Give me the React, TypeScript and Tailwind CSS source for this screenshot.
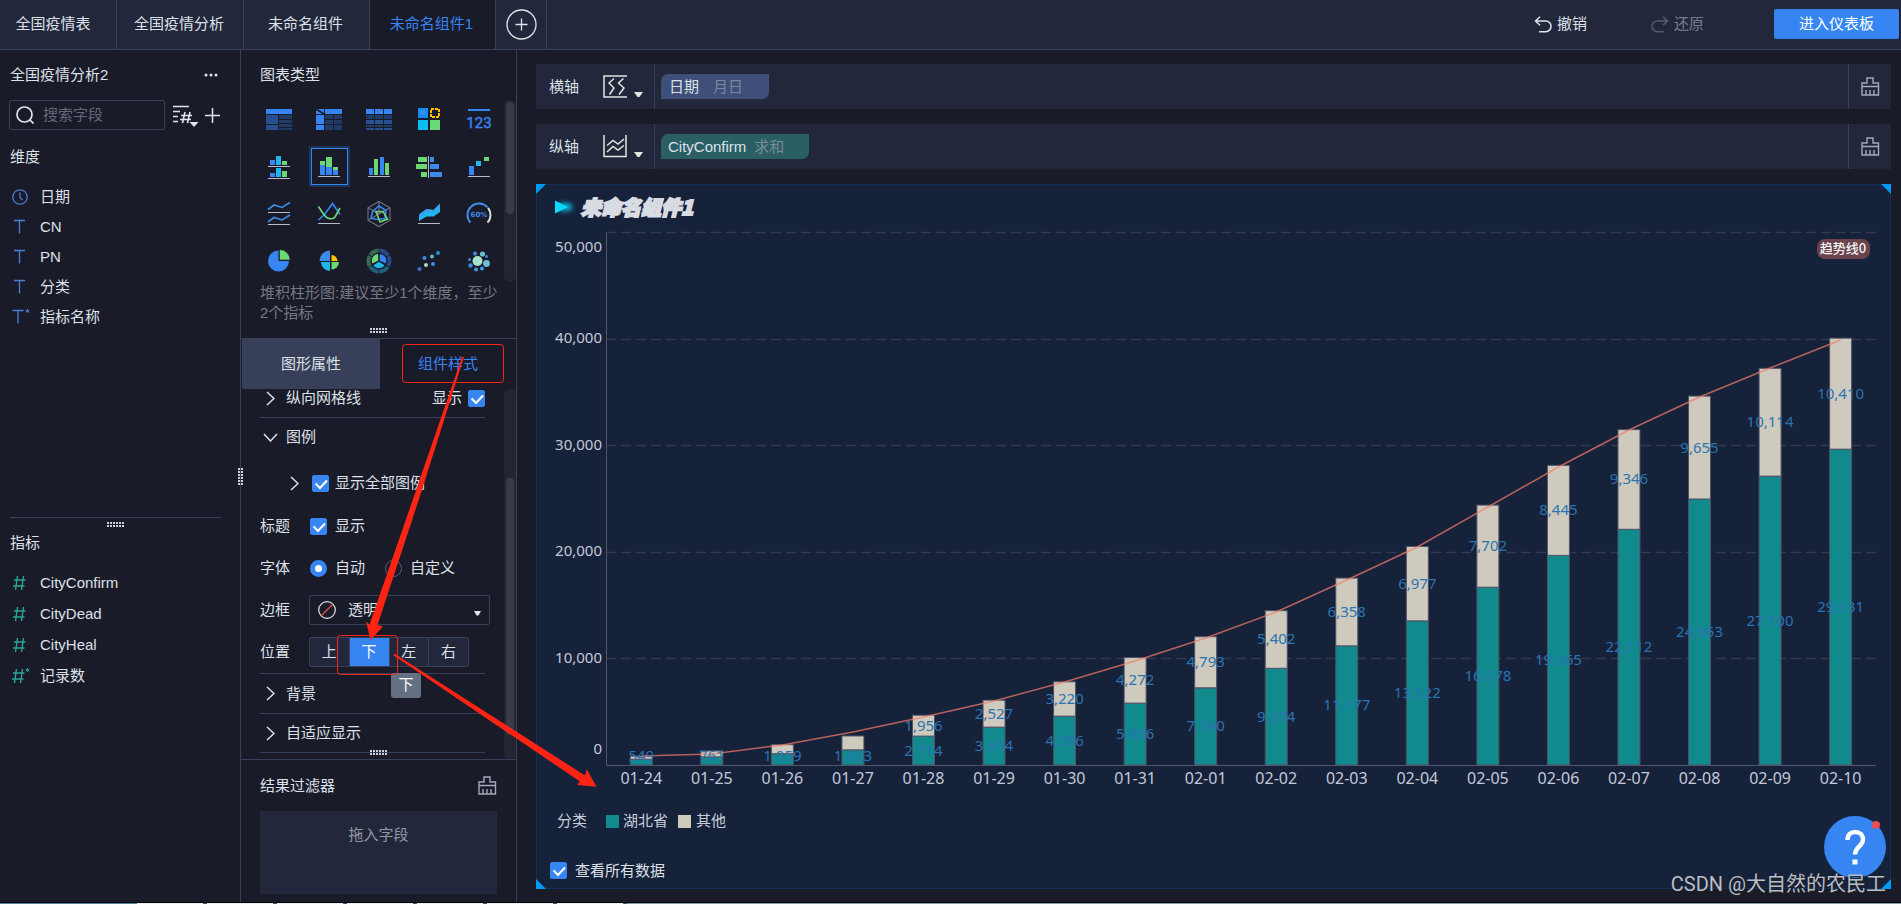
import React from "react";

const BLUE = "#3685f2";
const GREEN = "#6bd876";
const CYAN = "#1fb6ec";
const NAVY = "#1f3c66";
const MID = "#26508f";

function wedge(cx: number, cy: number, r: number, a0: number, a1: number) {
  const rad = Math.PI / 180;
  const x0 = cx + r * Math.cos(a0 * rad);
  const y0 = cy + r * Math.sin(a0 * rad);
  const x1 = cx + r * Math.cos(a1 * rad);
  const y1 = cy + r * Math.sin(a1 * rad);
  return `M${cx} ${cy}L${x0} ${y0}A${r} ${r} 0 ${a1 - a0 > 180 ? 1 : 0} 1 ${x1} ${y1}Z`;
}

function arc(cx: number, cy: number, r: number, a0: number, a1: number) {
  const rad = Math.PI / 180;
  return `M${cx + r * Math.cos(a0 * rad)} ${cy + r * Math.sin(a0 * rad)}A${r} ${r} 0 ${
    a1 - a0 > 180 ? 1 : 0
  } 1 ${cx + r * Math.cos(a1 * rad)} ${cy + r * Math.sin(a1 * rad)}`;
}

type R = [number, number, number, number, string];
const Rects = ({ items }: { items: R[] }) => (
  <>
    {items.map(([x, y, w, h, f], i) => (
      <rect key={i} x={x} y={y} width={w} height={h} fill={f} />
    ))}
  </>
);
const Base = ({ y }: { y: number }) => <rect x="9" y={y} width="22" height="1" fill="#b9bcc6" />;
type D = [number, number, number, string];
const Dots = ({ items }: { items: D[] }) => (
  <>
    {items.map(([x, y, r, f], i) => (
      <circle key={i} cx={x} cy={y} r={r} fill={f} />
    ))}
  </>
);

const chartTypes: { name: string; art: React.ReactNode }[] = [
  {
    name: "分组表",
    art: (
      <Rects
        items={[
          [7, 9, 26, 5, BLUE],
          [7, 15, 12, 9, MID],
          [7, 25, 12, 5, MID],
          [20, 15, 13, 4, NAVY],
          [20, 20, 13, 3, NAVY],
          [20, 24, 13, 3, NAVY],
          [20, 28, 13, 2, NAVY],
        ]}
      />
    ),
  },
  {
    name: "交叉表",
    art: (
      <>
        <Rects
          items={[
            [7, 9, 8, 5, BLUE],
            [16, 9, 17, 5, BLUE],
            [7, 15, 8, 9, BLUE],
            [7, 25, 8, 5, BLUE],
            [16, 15, 8, 4, NAVY],
            [25, 15, 8, 4, NAVY],
            [16, 20, 8, 4, NAVY],
            [25, 20, 8, 4, NAVY],
            [16, 25, 8, 5, NAVY],
            [25, 25, 8, 5, NAVY],
          ]}
        />
        <path d="M7 9l8 5" stroke="#1a1b29" strokeWidth="1.6" />
      </>
    ),
  },
  {
    name: "明细表",
    art: (
      <Rects
        items={[7, 16, 25].flatMap((x): R[] => [
          [x, 9, 8, 5, BLUE],
          [x, 15, 8, 4, NAVY],
          [x, 20, 8, 4, MID],
          [x, 25, 8, 2, NAVY],
          [x, 28, 8, 2, MID],
        ])}
      />
    ),
  },
  {
    name: "颜色表格",
    art: (
      <>
        <Rects
          items={[
            [9, 8, 10, 10, "#0b8ff5"],
            [11, 10, 5, 5, "#3f8ae8"],
            [9, 20, 10, 10, "#0cbdf5"],
            [21, 20, 10, 10, GREEN],
          ]}
        />
        <rect x="22" y="9" width="8" height="8" fill="none" stroke="#fdc202" strokeWidth="2" strokeDasharray="3 1" />
      </>
    ),
  },
  {
    name: "指标卡",
    art: (
      <>
        <rect x="9" y="9" width="22" height="2" fill={BLUE} />
        <text
          x="20"
          y="28"
          textAnchor="middle"
          fontSize="15"
          fill={BLUE}
          stroke={BLUE}
          strokeWidth=".4"
          fontFamily="'Liberation Sans Narrow',Roboto,sans-serif"
        >
          123
        </text>
      </>
    ),
  },
  {
    name: "多系列柱形图",
    art: (
      <>
        <Rects
          items={[
            [11, 13, 5, 5, BLUE],
            [17, 9, 5, 9, CYAN],
            [23, 14, 5, 4, GREEN],
            [11, 26, 5, 4, BLUE],
            [17, 21, 5, 9, CYAN],
            [23, 24, 5, 6, GREEN],
          ]}
        />
        <Base y={19} />
        <Base y={31} />
      </>
    ),
  },
  {
    name: "堆积柱形图",
    art: (
      <>
        <Rects
          items={[
            [11, 14, 5, 4, GREEN],
            [11, 18, 5, 10, BLUE],
            [17, 10, 6, 10, GREEN],
            [17, 20, 6, 8, BLUE],
            [24, 20, 5, 3, GREEN],
            [24, 23, 5, 5, BLUE],
          ]}
        />
        <Base y={29} />
      </>
    ),
  },
  {
    name: "分组柱形图",
    art: (
      <>
        <Rects
          items={[
            [10, 21, 4, 7, BLUE],
            [15, 12, 4, 16, GREEN],
            [21, 10, 4, 18, BLUE],
            [26, 16, 4, 12, GREEN],
          ]}
        />
        <Base y={29} />
      </>
    ),
  },
  {
    name: "对比柱状图",
    art: (
      <Rects
        items={[
          [9, 10, 9, 5, GREEN],
          [7, 17, 11, 5, GREEN],
          [12, 25, 6, 5, GREEN],
          [21, 10, 4, 5, "#3f8ae8"],
          [21, 17, 9, 5, "#3f8ae8"],
          [21, 25, 12, 5, "#3f8ae8"],
          [19, 9, 1, 22, "#b9bcc6"],
        ]}
      />
    ),
  },
  {
    name: "瀑布图",
    art: (
      <>
        <Rects
          items={[
            [10, 19, 5, 9, BLUE],
            [17, 14, 5, 5, CYAN],
            [25, 10, 5, 4, GREEN],
          ]}
        />
        <Base y={29} />
      </>
    ),
  },
  {
    name: "多系列折线图",
    art: (
      <>
        <path d="M9 15.5l6-4.5 8 2.5 8-5M9 28l6-4.5 8 2.5 8-5" fill="none" stroke="#3f8ae8" strokeWidth="1.6" />
        <Base y={18} />
        <Base y={30} />
      </>
    ),
  },
  {
    name: "范围面积图",
    art: (
      <>
        <path d="M9.5 26l6-5.500 8-11 7.500 11" fill="none" stroke={BLUE} strokeWidth="1.6" />
        <path d="M9.5 12.500Q16 23 18.500 24Q24 26 26 23L31 14" fill="none" stroke={GREEN} strokeWidth="1.6" />
        <Base y={29} />
      </>
    ),
  },
  {
    name: "雷达图",
    art: (
      <g fill="none">
        <path
          d="M20 7.500l11 6.250v12.500l-11 6.250-11-6.250v-12.500zM20 7.500v12.500M9 13.750l11 6.250M31 13.750l-11 6.250M9 26.250l11-6.250"
          stroke="#6f7482"
          strokeWidth="1.1"
        />
        <path d="M20 12l7 4.500-1 8-9 1-5-1.500 1.500-6.500z" stroke={BLUE} strokeWidth="1.6" />
        <path d="M17 17.500h7l4.500 7.500-7.500 3z" stroke={GREEN} strokeWidth="1.6" />
      </g>
    ),
  },
  {
    name: "堆积面积图",
    art: (
      <>
        <path d="M10 20.500l7.500-5.500 7 1 6.500-6.500v8.500l-6.500 4.500-7 0-7.500 4.500z" fill="#1fb6f2" />
        <path d="M10 20.500l7.500-5.500 7 1 6.500-6.500v3l-6.500 6-7-.5-7.500 5z" fill="#3f9cf0" />
        <Base y={29} />
      </>
    ),
  },
  {
    name: "仪表盘",
    art: (
      <>
        <path d={arc(20, 21, 11.5, 138, 318)} fill="none" stroke="#3f8ae8" strokeWidth="2" />
        <path d={arc(20, 21, 11.5, 322, 402)} fill="none" stroke="#dcdee4" strokeWidth="2" />
        <text x="20" y="23" textAnchor="middle" fontSize="7" fontWeight="700" fill="#3f8ae8" fontFamily="'DejaVu Sans',sans-serif">
          60%
        </text>
      </>
    ),
  },
  {
    name: "饼图",
    art: (
      <>
        <path d={wedge(19.5, 20, 10.5, 0, 270)} fill={BLUE} />
        <path d={wedge(20.5, 19, 10.5, 270, 360)} fill={GREEN} stroke="#1a1b29" strokeWidth=".6" />
      </>
    ),
  },
  {
    name: "玫瑰图",
    art: (
      <>
        <path d={wedge(21, 20, 10.5, 180, 270)} fill="#3f8ae8" />
        <path d={wedge(22.5, 20, 6, 270, 360)} fill="#fdc202" />
        <path d={wedge(21, 21, 9, 90, 180)} fill={CYAN} />
        <path d={wedge(22.5, 21, 7.5, 0, 90)} fill={GREEN} />
      </>
    ),
  },
  {
    name: "多层饼图",
    art: (
      <>
        <g fill="none" strokeWidth="4">
          <path d={arc(20, 20, 10.5, 272, 328)} stroke="#274a85" />
          <path d={arc(20, 20, 10.5, 333, 388)} stroke="#274a85" />
          <path d={arc(20, 20, 10.5, 33, 88)} stroke="#21607d" />
          <path d={arc(20, 20, 10.5, 92, 148)} stroke="#21607d" />
          <path d={arc(20, 20, 10.5, 152, 208)} stroke="#386a50" />
          <path d={arc(20, 20, 10.5, 213, 268)} stroke="#386a50" />
        </g>
        <path d={wedge(20.7, 19.5, 6.5, 272, 388)} fill={BLUE} />
        <path d={wedge(20, 20.7, 6.5, 32, 148)} fill={CYAN} />
        <path d={wedge(19.3, 19.5, 6.5, 152, 268)} fill={GREEN} />
      </>
    ),
  },
  {
    name: "散点图",
    art: (
      <Dots
        items={[
          [10.5, 28, 2, "#3f6fc8"],
          [17, 24, 2, "#a6e0c4"],
          [15.5, 17, 2, "#3f8ae8"],
          [23, 15.5, 2, "#5cbcd0"],
          [24, 23, 2, "#3f8ae8"],
          [29, 12, 2, "#1f8fdc"],
        ]}
      />
    ),
  },
  {
    name: "聚合气泡图",
    art: (
      <Dots
        items={[
          [18.5, 20, 5, "#a9e2cb"],
          [27.5, 22.5, 3.4, "#68bfd2"],
          [23.5, 13, 2.6, "#68bfd2"],
          [16, 12.5, 2, "#3f8ae8"],
          [27.5, 15.5, 1.4, "#3f8ae8"],
          [10.5, 18.5, 1.5, "#3f8ae8"],
          [11.5, 24.5, 2.2, "#3f8ae8"],
          [17, 28.5, 1.9, "#3f9cf0"],
          [23, 27.5, 1.9, "#3f9cf0"],
        ]}
      />
    ),
  },
];

/* ---------- small icons ---------- */

const Brush = () => (
  <svg width="19" height="19" viewBox="0 0 19 19" fill="none" stroke="#a3a9bb" strokeWidth="1.4">
    <path d="M1 18V6h5V1h6v5h5.500v12zM1 9.500h16.500M5 18v-5M9 18v-5M13 18v-5" />
  </svg>
);
const Caret = () => (
  <svg width="9" height="6" viewBox="0 0 9 6" fill="#dfe7df">
    <path d="M0 0h9L5.500 5h-2z" />
  </svg>
);
const Right = () => (
  <svg width="9" height="15" viewBox="0 0 9 15" fill="none" stroke="#dfe3ea" strokeWidth="1.5">
    <path d="M1 1l7 6.500-7 6.500" />
  </svg>
);
const Down = () => (
  <svg width="15" height="9" viewBox="0 0 15 9" fill="none" stroke="#dfe3ea" strokeWidth="1.5">
    <path d="M1 1l6.500 7L14 1" />
  </svg>
);
const Grip = () => (
  <svg width="17" height="5" viewBox="0 0 17 5" fill="#cdd0d6" aria-hidden="true">
    {[0, 3, 6, 9, 12, 15].map((x) => (
      <g key={x}>
        <rect x={x} width="2" height="2" />
        <rect x={x} y="3" width="2" height="2" />
      </g>
    ))}
  </svg>
);
const TIcon = ({ star }: { star?: boolean }) => (
  <svg width="18" height="16" viewBox="0 0 18 16" fill="none" stroke="#4a7fd8" strokeWidth="1.3">
    <path d={star ? "M.5 1.500h11M6 1.500v13" : "M2 1.500h11M7.500 1.500v13"} />
    {star && <path d="M15.500 0v4M13.700 1l3.600 2M17.300 1l-3.600 2" strokeWidth=".9" />}
  </svg>
);
const HashIcon = ({ star }: { star?: boolean }) => (
  <svg width="18" height="16" viewBox="0 0 18 16" fill="none" stroke="#2aa596" strokeWidth="1.4">
    <path d={star ? "M4.500 1l-2 14M10.500 1l-2 14M1 5h11.500M0 11h11.500" : "M5.500 1l-2 14M11.500 1l-2 14M2 5h11.500M1 11h11.500"} />
    {star && <path d="M15.500 0v4M13.700 1l3.600 2M17.300 1l-3.600 2" strokeWidth=".9" />}
  </svg>
);
const ClockIcon = () => (
  <svg width="18" height="16" viewBox="0 0 18 16" fill="none" stroke="#4a7fd8" strokeWidth="1.3">
    <circle cx="8" cy="8" r="7.2" />
    <path d="M8 3.500v5l2.500 2.500" />
  </svg>
);

function Check({ id, label, className = "" }: { id: string; label: string; className?: string }) {
  return (
    <label htmlFor={id} className={`relative flex items-center gap-2 ${className}`}>
      <span className="relative block size-[17px]">
        <input
          id={id}
          type="checkbox"
          defaultChecked
          className="peer block size-[17px] appearance-none rounded-[2px] border border-[#6b7285] checked:border-[#3685f2] checked:bg-[#3685f2]"
        />
        <svg
          viewBox="0 0 17 17"
          className="pointer-events-none absolute inset-0 hidden peer-checked:block"
          fill="none"
          stroke="#fff"
          strokeWidth="2"
        >
          <path d="M3.500 8.500l4.500 4.500 7-7.500" />
        </svg>
      </span>
      {label}
    </label>
  );
}

function Radio({ id, label, on }: { id: string; label: string; on?: boolean }) {
  return (
    <label htmlFor={id} className="flex items-center gap-2">
      <input
        id={id}
        type="radio"
        name="legend-font"
        defaultChecked={on}
        className="block size-[17px] appearance-none rounded-full border border-[#5b6174] checked:border-[5px] checked:border-[#3685f2] checked:bg-white"
      />
      {label}
    </label>
  );
}

/* ---------- chart ---------- */

/* date, first series, second series, trend line y */
const data: [string, number, number, number][] = [
  ["01-24", 549, 280, 527],
  ["01-25", 761, 560, 525],
  ["01-26", 1059, 850, 516],
  ["01-27", 1423, 1300, 503],
  ["01-28", 2714, 1956, 488],
  ["01-29", 3554, 2527, 472],
  ["01-30", 4586, 3220, 453],
  ["01-31", 5806, 4272, 432],
  ["02-01", 7240, 4793, 409],
  ["02-02", 9074, 5402, 383],
  ["02-03", 11177, 6358, 351],
  ["02-04", 13522, 6977, 318],
  ["02-05", 16678, 7702, 278],
  ["02-06", 19665, 8445, 238],
  ["02-07", 22112, 9346, 201],
  ["02-08", 24953, 9655, 168],
  ["02-09", 27100, 10114, 139],
  ["02-10", 29631, 10410, 111],
];

const AXIS_X = 69;
const AXIS_Y = 536;
const SLOT = 70.55;
const UNIT = 106.6 / 10000;

function Chart() {
  const cx = (i: number) => AXIS_X + SLOT * (i + 0.5);
  const fmt = (n: number) => n.toLocaleString("en-US");
  return (
    <svg
      viewBox="0 0 1353 571"
      className="block w-full"
      role="img"
      aria-label="未命名组件1"
      fontFamily="'Noto Sans','Noto Sans CJK SC',sans-serif"
      fontSize="15"
    >
      {[0, 1, 2, 3, 4].map((k) => (
        <line
          key={k}
          x1={AXIS_X}
          x2="1339"
          y1={Math.round(AXIS_Y - (k + 1) * 106.6) + 0.5}
          y2={Math.round(AXIS_Y - (k + 1) * 106.6) + 0.5}
          stroke="#343a4e"
          strokeWidth="1.5"
          strokeDasharray="10 5"
        />
      ))}
      <g fill="#c3c9d8" textAnchor="end">
        <text x="65" y="23">50,000</text>
        <text x="65" y="114">40,000</text>
        <text x="65" y="221">30,000</text>
        <text x="65" y="327">20,000</text>
        <text x="65" y="434">10,000</text>
        <text x="65" y="525">0</text>
      </g>
      {data.map(([d, a, b], i) => {
        const ya = AXIS_Y - a * UNIT;
        const yb = ya - b * UNIT;
        return (
          <g key={d} stroke="#4f5266" strokeWidth="1">
            <rect x={cx(i) - 11} y={ya} width="22" height={AXIS_Y - ya} fill="#118a8d" />
            <rect x={cx(i) - 11} y={yb} width="22" height={ya - yb} fill="#cfcabe" />
          </g>
        );
      })}
      <path d="M69.5 4V536.5H1339" fill="none" stroke="#52566b" strokeWidth="1" />
      <polyline
        points={data.map((r, i) => `${cx(i)},${r[3]}`).join(" ")}
        fill="none"
        stroke="#f27d68"
        strokeOpacity=".72"
        strokeWidth="1.5"
      />
      <g fill="#2a74b2" textAnchor="middle">
        {data.map(([d, a, b], i) => {
          const ya = AXIS_Y - a * UNIT;
          return (
            <React.Fragment key={d}>
              <text x={cx(i)} y={Math.min(532, ya + (a * UNIT) / 2 + 5)}>{fmt(a)}</text>
              {i > 3 && <text x={cx(i)} y={ya - (b * UNIT) / 2 + 5}>{fmt(b)}</text>}
            </React.Fragment>
          );
        })}
      </g>
      <g fill="#c3c9d8" textAnchor="middle" fontSize="16">
        {data.map(([d], i) => (
          <text key={d} x={cx(i)} y="555">{d}</text>
        ))}
      </g>
      <rect x="1280" y="10" width="53" height="20" rx="8" fill="#6b434d" />
      <text x="1306" y="24" textAnchor="middle" fontSize="13" fontWeight="500" fill="#f4f4f6" fontFamily="'Noto Sans CJK SC',sans-serif">
        趋势线0
      </text>
    </svg>
  );
}

/* ---------- page ---------- */

const tabClass = "border-r border-[#39415a] text-center";

function AxisRow({ label, icon, children }: { label: string; icon: React.ReactNode; children: React.ReactNode }) {
  return (
    <div className="flex h-[45px] items-stretch bg-[#22273b]">
      <div className="flex w-[119px] items-center border-r border-[#39415a] pl-[13px]">
        <span className="w-[54px]">{label}</span>
        <button type="button" aria-label={`${label}设置`} className="flex items-end gap-[7px]">
          {icon}
          <Caret />
        </button>
      </div>
      <div className="flex flex-1 items-start px-[6px] pt-[10px]">{children}</div>
      <button type="button" aria-label={`清空${label}`} className="grid w-[43px] place-items-center border-l border-[#39415a]">
        <Brush />
      </button>
    </div>
  );
}

function Row({ label, children }: { label: string; children: React.ReactNode }) {
  return (
    <div className="flex h-[42px] items-center">
      <span className="w-[49px]">{label}</span>
      {children}
    </div>
  );
}

export default function App() {
  return (
    <div className="relative flex min-h-screen flex-col overflow-hidden bg-[#1a1b29] font-['Liberation_Sans','Noto_Sans_CJK_SC',sans-serif] text-[15px] leading-5 text-[#dde1e8]">
      <header className="flex h-[50px] items-stretch border-b border-[#39415a] bg-[#22273b]">
        <button type="button" className={`${tabClass} w-[117px] pr-[10px] pb-[2px]`}>全国疫情表</button>
        <button type="button" className={`${tabClass} w-[127px] pr-[2px] pb-[2px]`}>全国疫情分析</button>
        <button type="button" className={`${tabClass} w-[126px] pr-[2px] pb-[2px]`}>未命名组件</button>
        <button type="button" className={`${tabClass} w-[126px] bg-[#1a1b29] pr-[2px] pb-[2px] text-[#3685f2]`}>未命名组件1</button>
        <button type="button" aria-label="添加" className="grid w-[51px] place-items-center border-r border-[#39415a]">
          <svg width="31" height="31" viewBox="0 0 31 31" fill="none" stroke="#dfe3ea" strokeWidth="1.3">
            <circle cx="15.5" cy="15.5" r="14.5" />
            <path d="M15.500 9.500v12M9.500 15.500h12" />
          </svg>
        </button>
        <div className="ml-auto flex items-center pr-[2px] pb-px">
          <button type="button" className="mr-[64px] flex items-center gap-[5px]">
            <svg width="18" height="17" viewBox="0 0 18 17" fill="none" stroke="#dfe3ea" strokeWidth="1.5">
              <path d="M6 .8L1.500 5 6 9.200M1.500 5h10.200a5.300 5.300 0 0 1 0 10.700H5" />
            </svg>
            撤销
          </button>
          <button type="button" disabled className="mr-[70px] flex items-center gap-[5px] text-[#777d8e]">
            <svg width="18" height="17" viewBox="0 0 18 17" fill="none" stroke="#555b6d" strokeWidth="1.5">
              <path d="M12 .8L16.500 5 12 9.200M16.500 5H6.300a5.300 5.300 0 0 0 0 10.700H13" />
            </svg>
            还原
          </button>
          <button type="button" className="h-[30px] w-[125px] rounded-[2px] bg-[#3685f2] text-white">进入仪表板</button>
        </div>
      </header>

      <div className="flex flex-1 items-stretch">
        {/* fields */}
        <aside className="relative w-[241px] shrink-0 border-r border-[#39415a]">
          <div className="flex h-[50px] items-center justify-between pr-[22px] pl-[10px]">
            <h2>全国疫情分析2</h2>
            <button type="button" aria-label="更多">
              <svg width="14" height="4" viewBox="0 0 14 4" fill="#dfe3ea">
                <circle cx="2" cy="2" r="1.5" />
                <circle cx="7" cy="2" r="1.5" />
                <circle cx="12" cy="2" r="1.5" />
              </svg>
            </button>
          </div>
          <div className="flex h-[30px] items-center pl-[9px]">
            <label htmlFor="field-search" className="flex h-[30px] w-[156px] items-center gap-[9px] rounded-[2px] border border-[#39415a] pl-[6px]">
              <svg width="18" height="18" viewBox="0 0 18 18" fill="none" stroke="#dfe3ea" strokeWidth="1.7" className="shrink-0">
                <circle cx="8.5" cy="8.5" r="7.5" />
                <path d="M14 14l3.500 3.500" />
              </svg>
              <input
                id="field-search"
                type="text"
                placeholder="搜索字段"
                aria-label="搜索字段"
                className="w-full min-w-0 bg-transparent outline-none placeholder:text-[#62677a]"
              />
            </label>
            <button type="button" aria-label="排序" className="ml-[8px] pt-[2px]">
              <svg width="26" height="22" viewBox="0 0 26 22" fill="none" stroke="#dfe3ea" strokeWidth="1.6">
                <path d="M0 1.500h16M0 6.500h7M0 11.500h5M0 16.500h5M12 7l-2.500 11M17 7l-2.500 11M8 10.500h11M7 14.500h11" />
                <path d="M16.500 17h9L21 22z" fill="#dfe3ea" stroke="none" />
              </svg>
            </button>
            <button type="button" aria-label="新增" className="ml-[6px]">
              <svg width="15" height="15" viewBox="0 0 15 15" fill="none" stroke="#dfe3ea" strokeWidth="1.5">
                <path d="M7.500 0v15M0 7.500h15" />
              </svg>
            </button>
          </div>
          <section className="h-[387px]">
            <h3 className="flex h-[52px] items-center pt-[2px] pl-[10px]">维度</h3>
            <ul>
              {["日期", "CN", "PN", "分类", "指标名称"].map((t, i) => (
                <li key={t} className="flex h-[30px] items-center gap-[10px] pl-[12px]">
                  {i === 0 ? <ClockIcon /> : <TIcon star={i === 4} />}
                  {t}
                </li>
              ))}
            </ul>
          </section>
          <section className="relative mr-[19px] ml-[10px] border-t border-[#39415a]">
            <div className="absolute top-[4px] left-[97px]"><Grip /></div>
            <h3 className="flex h-[49px] items-center">指标</h3>
            <ul>
              {["CityConfirm", "CityDead", "CityHeal", "记录数"].map((t, i) => (
                <li key={t} className="flex h-[31px] items-center gap-[10px] pl-[2px]">
                  <HashIcon star={i === 3} />
                  {t}
                </li>
              ))}
            </ul>
          </section>
          <div className="absolute top-[424px] -right-[9px] rotate-90"><Grip /></div>
        </aside>

        {/* chart type and style */}
        <aside className="w-[276px] shrink-0 border-r border-[#39415a]">
          <section className="relative border-b border-[#39415a]">
            <h2 className="flex h-[45px] items-center pt-[5px] pl-[19px]">图表类型</h2>
            <div className="grid h-[188px] auto-rows-[47px] grid-cols-[repeat(5,50px)] pt-px pl-[13px]">
              {chartTypes.map(({ name, art }, i) => (
                <button key={name} type="button" aria-label={name} className="grid place-items-center">
                  <span className={i === 6 ? "grid size-[41px] place-items-center border-2 border-[#1f3355]" : "block"}>
                    <span className={i === 6 ? "grid size-[37px] place-items-center border border-[#3685f2]" : "block"}>
                      <svg width="40" height="40" viewBox="0 0 40 40" className={i === 6 ? "-m-[3px]" : ""}>
                        {art}
                      </svg>
                    </span>
                  </span>
                </button>
              ))}
            </div>
            <p className="w-[258px] pl-[19px] text-[#767982]">堆积柱形图:建议至少1个维度，至少2个指标</p>
            <div className="flex h-[15px] items-center justify-center"><Grip /></div>
            <div className="absolute top-[50px] right-0 h-[182px] w-[12px] rounded-full bg-[#242532] p-[2px]">
              <div className="h-[112px] rounded-full bg-[#3a3b47]" />
            </div>
          </section>

          <div className="flex h-[50px] pl-px">
            <button type="button" className="w-[138px] bg-[#384059]">图形属性</button>
            <button type="button" className="flex-1 text-[#3685f2]">组件样式</button>
          </div>

          <section className="relative h-[371px] border-b border-[#39415a] pr-[31px] pl-[19px]">
            <div className="flex h-[29px] items-start border-b border-[#39415a] pl-[6px]">
              <span className="flex h-[18px] flex-1 items-center gap-[11px]"><Right />纵向网格线</span>
              <Check id="grid-v" label="显示" className="h-[18px] flex-row-reverse gap-[6px]" />
            </div>
            <div className="flex h-[38px] items-center gap-[8px] pl-[3px]"><Down />图例</div>
            <div className="flex h-[49px] items-center gap-[13px] pt-[5px] pl-[30px]">
              <Right />
              <Check id="legend-all" label="显示全部图例" className="gap-[6px]" />
            </div>
            <Row label="标题"><span className="pl-px"><Check id="legend-title" label="显示" /></span></Row>
            <Row label="字体">
              <span className="flex gap-[20px] pl-px">
                <Radio id="font-auto" label="自动" on />
                <Radio id="font-custom" label="自定义" />
              </span>
            </Row>
            <div className="flex h-[42px] items-center">
              <label htmlFor="legend-border" className="w-[49px] shrink-0">边框</label>
              <span className="relative -mr-[5px] block flex-1">
                <select
                  id="legend-border"
                  className="block h-[30px] w-full appearance-none rounded-[2px] border border-[#39415a] bg-[#1a1b29] pl-[38px]"
                >
                  <option>透明</option>
                </select>
                <svg width="18" height="18" viewBox="0 0 18 18" fill="none" className="pointer-events-none absolute top-[6px] left-[9px]">
                  <circle cx="9" cy="9" r="8.3" stroke="#dfe3ea" strokeWidth="1.2" />
                  <path d="M3.500 14.500l11-11" stroke="#e04848" strokeWidth="1.4" />
                </svg>
                <svg width="7" height="5" viewBox="0 0 7 5" fill="#dfe3ea" className="pointer-events-none absolute top-[16px] right-[9px]">
                  <path d="M0 0h7L4.500 4.500h-2z" />
                </svg>
              </span>
            </div>
            <Row label="位置">
              <span className="flex h-[30px] w-[160px] divide-x divide-[#39415a] rounded-[2px] border border-[#39415a] bg-[#22273b]">
                <button type="button" className="flex-1">上</button>
                <button type="button" className="flex-1 bg-[#3685f2] text-white">下</button>
                <button type="button" className="flex-1">左</button>
                <button type="button" className="flex-1">右</button>
              </span>
            </Row>
            <div className="flex h-[40px] items-center gap-[11px] border-t border-[#39415a] pl-[6px]"><Right />背景</div>
            <div className="flex h-[40px] items-center gap-[11px] border-y border-[#39415a] pl-[6px]"><Right />自适应显示</div>
            <div className="absolute bottom-[4px] left-[129px]"><Grip /></div>
            <div className="absolute top-0 right-0 h-[370px] w-[12px] rounded-full bg-[#242532] px-[2px] pt-[89px]">
              <div className="h-[257px] rounded-full bg-[#3a3b47]" />
            </div>
            <div role="tooltip" className="absolute top-[284px] left-[150px] grid h-[25px] w-[30px] place-items-center rounded-[3px] bg-[#667083] pb-[2px] text-white">下</div>
          </section>

          <section className="pr-[19px] pl-[19px]">
            <div className="flex h-[51px] items-center justify-between">
              <h2>结果过滤器</h2>
              <button type="button" aria-label="清空过滤器"><Brush /></button>
            </div>
            <div className="h-[83px] bg-[#22273b] pt-[14px] text-center text-[#9196a5]">拖入字段</div>
          </section>
        </aside>

        {/* canvas */}
        <main className="flex min-w-0 flex-1 flex-col gap-[15px] pt-[14px] pr-[10px] pl-[19px]">
          <AxisRow
            label="横轴"
            icon={
              <svg width="24" height="23" viewBox="0 0 24 23" fill="none" stroke="#dfe7df" strokeWidth="1.5">
                <path d="M24 1H1v21h23" />
                <path d="M11 3.500L6 8l5 5-4.500 6.500M20.500 3.500L15.500 8l5.500 5-5 6.500" />
              </svg>
            }
          >
            <span className="flex h-[25px] w-[108px] items-center gap-[14px] rounded-tl-[7px] rounded-br-[7px] bg-[#3e4f7a] pl-[8px]">
              日期 <span className="text-[#7f86a0]">月日</span>
            </span>
          </AxisRow>
          <AxisRow
            label="纵轴"
            icon={
              <svg width="24" height="23" viewBox="0 0 24 23" fill="none" stroke="#dfe7df" strokeWidth="1.5">
                <path d="M1 0v21.500h22V0" />
                <path d="M4 10.500l6-5 5 3.500 6-5M4 17l6-5.500 5 3.500 6-4.500" />
              </svg>
            }
          >
            <span className="flex h-[25px] w-[148px] items-center gap-[8px] rounded-tl-[7px] rounded-br-[7px] bg-[#2a5f66] pl-[7px]">
              CityConfirm <span className="text-[#7a8c9a]">求和</span>
            </span>
          </AxisRow>

          <section className="relative border border-[#12305a] bg-[#16213a]">
            <h1 className="flex h-[44px] items-center pl-[18px]">
              <svg width="26" height="22" viewBox="0 0 26 22" className="overflow-visible">
                <defs>
                  <filter id="glow" x="-50%" y="-50%" width="200%" height="200%">
                    <feGaussianBlur stdDeviation="2.5" />
                  </filter>
                </defs>
                <path d="M4 7h11l3 4-3 4H4z" fill="#0cd3ff" opacity=".8" filter="url(#glow)" />
                <path d="M0 4.500L13 11 0 17.500z" fill="#0cd9ff" />
              </svg>
              <span className="font-['Noto_Sans_CJK_SC',sans-serif] text-[20px] font-black text-[#d9dbe3] italic [-webkit-text-stroke:2px_#d9dbe3]">未命名组件1</span>
            </h1>
            <Chart />
            <div className="flex h-[42px] items-center pl-[20px] text-[#c8cedc]">
              <span className="mr-[19px]">分类</span>
              <span className="mr-[4px] size-[13px] bg-[#118a8d]" />
              <span className="mr-[10px]">湖北省</span>
              <span className="mr-[5px] size-[13px] bg-[#cfcabe]" />
              <span>其他</span>
            </div>
            <div className="flex h-[46px] items-center pt-[11px] pl-[13px]">
              <Check id="all-data" label="查看所有数据" />
            </div>
            <svg width="10" height="10" className="absolute -top-px -left-px" fill="#0099f8"><path d="M0 0h10L0 10z" /></svg>
            <svg width="10" height="10" className="absolute -top-px -right-px" fill="#0099f8"><path d="M0 0h10v10z" /></svg>
            <svg width="10" height="10" className="absolute -bottom-px -left-px" fill="#0099f8"><path d="M0 0v10h10z" /></svg>
            <svg width="10" height="10" className="absolute -right-px -bottom-px" fill="#0099f8"><path d="M10 0v10H0z" /></svg>
          </section>
        </main>
      </div>

      <footer className="flex h-[2px] border-t border-black">
        <div className="w-[137px] bg-[#4b8196]" />
        {[0, 1, 2, 3, 4, 5, 6].map((k) => (
          <div key={k} className="w-[70px] border-r-4 border-[#35566a] bg-[#e8eef2]" />
        ))}
        <div className="flex-1 bg-[#7d9bb2]" />
      </footer>

      <button type="button" aria-label="帮助" className="absolute right-[15px] bottom-[26px] grid size-[62px] place-items-center rounded-full bg-[#3685f2]">
        <svg width="62" height="62" viewBox="0 0 62 62" fill="none" className="overflow-visible">
          <path d="M23.500 24c0-5.500 3.500-8 7.700-8s7.800 2.800 7.800 7.500c0 7-8 7-8 15" stroke="#fff" strokeWidth="4.4" />
          <rect x="28.5" y="43.5" width="5" height="5" fill="#fff" />
          <circle cx="52" cy="9" r="4" fill="#e85050" />
        </svg>
      </button>
      <p className="absolute right-[15px] bottom-[8px] font-['Roboto','Noto_Sans_CJK_SC',sans-serif] text-[20px] leading-6 whitespace-nowrap text-[#b9bec8] [text-shadow:1px_1px_1px_#222]">
        CSDN @大自然的农民工
      </p>

      <svg width="640" height="904" viewBox="0 0 640 904" fill="none" className="pointer-events-none absolute top-0 left-0">
        <g stroke="#ff2314" strokeWidth="1">
          <rect x="402.5" y="344.5" width="101" height="38" rx="3" />
          <rect x="337.5" y="635.5" width="60" height="39" rx="3" />
        </g>
        <g fill="#ff2314">
          <path d="M464 357L418.700 500 377.500 625l5.500 1.500L370.500 640 366 621.500l3.500 3L412.700 500 462 357z" />
          <path d="M393 655l2-1L585 775.500l1.700-6.500 9.800 17.700-19.500-1.700 3-3.500z" />
        </g>
      </svg>
    </div>
  );
}
